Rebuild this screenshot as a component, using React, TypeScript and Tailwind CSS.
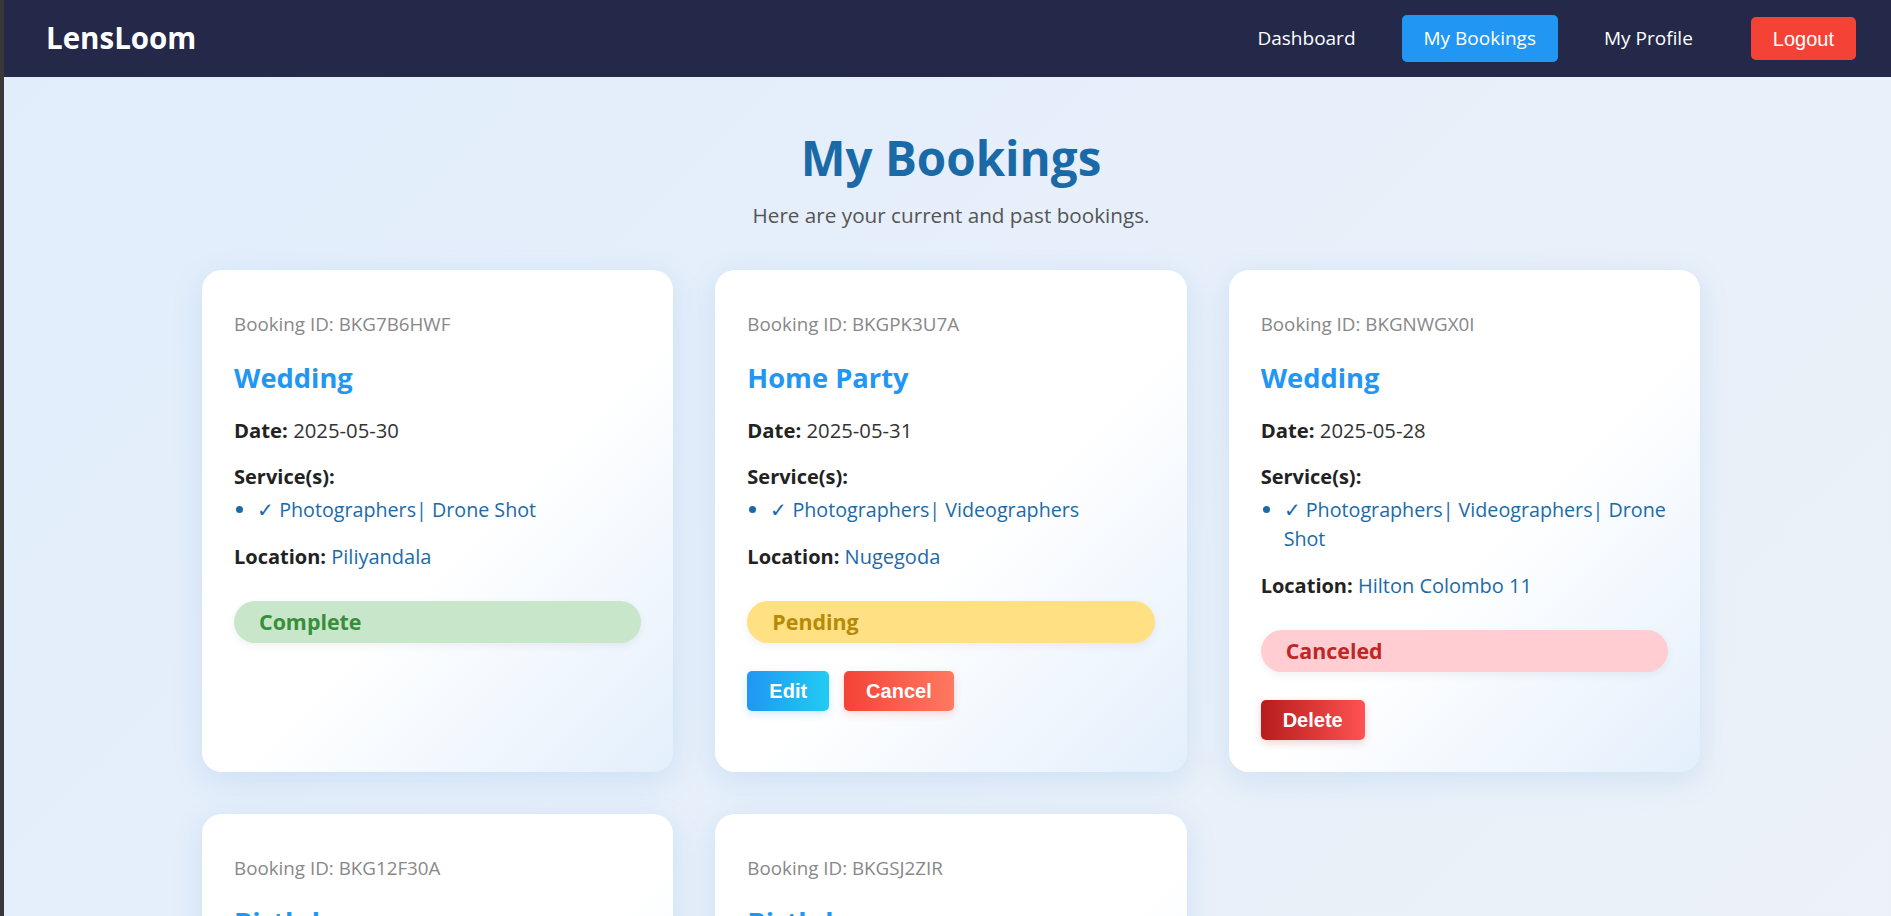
import React from "react";

type Status = "Complete" | "Pending" | "Canceled";

type Booking = {
  id: string;
  event: string;
  date: string;
  services: string;
  location: string;
  status: Status;
};

const bookings: Booking[] = [
  { id: "BKG7B6HWF", event: "Wedding", date: "2025-05-30", services: "Photographers| Drone Shot", location: "Piliyandala", status: "Complete" },
  { id: "BKGPK3U7A", event: "Home Party", date: "2025-05-31", services: "Photographers| Videographers", location: "Nugegoda", status: "Pending" },
  { id: "BKGNWGX0I", event: "Wedding", date: "2025-05-28", services: "Photographers| Videographers| Drone Shot", location: "Hilton Colombo 11", status: "Canceled" },
  { id: "BKG12F30A", event: "Birthday", date: "2025-06-02", services: "Photographers", location: "Colombo", status: "Pending" },
  { id: "BKGSJ2ZIR", event: "Birthday", date: "2025-06-05", services: "Photographers| Videographers", location: "Kandy", status: "Pending" },
];

const badgeStyles: Record<Status, string> = {
  Complete: "bg-[#c8e6c9] text-[#388e3c]",
  Pending: "bg-[#ffe082] text-[#b58a0a]",
  Canceled: "bg-[#ffcdd2] text-[#c02626]",
};

function NavLink({ label, active }: { label: string; active?: boolean }) {
  return (
    <a
      href="#"
      className={`flex h-[47px] items-center rounded-[5px] px-[22px] text-[19px] text-white ${
        active ? "bg-[#2196f3]" : ""
      }`}
    >
      {label}
    </a>
  );
}

function BookingCard({ b }: { b: Booking }) {
  return (
    <div className="rounded-[20px] bg-[linear-gradient(135deg,#ffffff_55%,#e3effc_100%)] px-[32px] pt-[40px] pb-[32px] shadow-[0_8px_32px_rgba(33,120,220,0.13)]">
      <p className="text-[18.8px] leading-[28px] text-[#888]">Booking ID: {b.id}</p>
      <h3 className="mt-[22px] text-[27.3px] font-bold leading-[36px] text-[#2196f3]">{b.event}</h3>
      <p className="mt-[20px] text-[20.3px] leading-[28px] text-[#333]">
        <span className="font-bold text-[#222]">Date:</span> {b.date}
      </p>
      <p className="mt-[19px] text-[20px] font-bold leading-[28px] text-[#222]">Service(s):</p>
      <ul className="mt-[4px] mr-[-10px] list-disc pl-[23px] text-[19.7px] leading-[29px] text-[#1b6aa8]">
        <li>✓ {b.services}</li>
      </ul>
      <p className="mt-[19px] text-[20px] leading-[28px] text-[#1b6aa8]">
        <span className="font-bold text-[#222]">Location:</span> {b.location}
      </p>
      <div
        className={`mt-[30px] flex h-[42px] items-center rounded-full px-[25px] text-[21.4px] font-bold shadow-[0_3px_10px_rgba(0,0,0,0.06)] ${badgeStyles[b.status]}`}
      >
        {b.status}
      </div>
      {b.status === "Pending" && (
        <div className="mt-[28px] flex gap-[15px] font-['Liberation_Sans',Arial,sans-serif]">
          <button className="h-[40px] rounded-[5px] bg-[linear-gradient(90deg,#2196f3,#21cbf3)] px-[22px] text-[20px] font-bold text-white shadow-[0_3px_8px_rgba(33,150,243,0.2)]">
            Edit
          </button>
          <button className="h-[40px] rounded-[5px] bg-[linear-gradient(90deg,#f44336,#ff7961)] px-[22px] text-[20px] font-bold text-white shadow-[0_3px_8px_rgba(244,67,54,0.2)]">
            Cancel
          </button>
        </div>
      )}
      {b.status === "Canceled" && (
        <div className="mt-[28px] flex font-['Liberation_Sans',Arial,sans-serif]">
          <button className="h-[40px] rounded-[5px] bg-[linear-gradient(90deg,#b71c1c,#ff5252)] px-[22px] text-[20px] font-bold text-white shadow-[0_3px_8px_rgba(183,28,28,0.2)]">
            Delete
          </button>
        </div>
      )}
    </div>
  );
}

export default function App() {
  return (
    <div className="flex min-h-screen font-['Open_Sans','Noto_Sans',sans-serif]">
      <div className="w-[4px] shrink-0 bg-[#383838]" />
      <div className="flex-1 bg-[linear-gradient(135deg,#e1edfc_0%,#eef2f7_100%)]">
        <nav className="flex h-[77px] items-center justify-between bg-[#242949] pl-[42px] pr-[35px]">
          <span className="text-[29.5px] font-bold text-white">LensLoom</span>
          <div className="flex items-center gap-[24px]">
            <NavLink label="Dashboard" />
            <NavLink label="My Bookings" active />
            <NavLink label="My Profile" />
            <button className="ml-[12px] h-[43px] rounded-[5px] bg-[#f44336] px-[22px] font-['Liberation_Sans',Arial,sans-serif] text-[20px] text-white">
              Logout
            </button>
          </div>
        </nav>

        <main className="pl-[7px] pt-[51px] pb-[60px]">
          <h1 className="text-center text-[47.5px] font-bold leading-[60px] text-[#1b6aa8]">My Bookings</h1>
          <p className="mt-[12px] text-center text-[20.7px] leading-[30px] text-[#555]">
            Here are your current and past bookings.
          </p>
          <div className="mx-auto mt-[40px] grid w-[1498px] grid-cols-3 gap-[42px]">
            {bookings.map((b) => (
              <BookingCard key={b.id} b={b} />
            ))}
          </div>
        </main>
      </div>
    </div>
  );
}
